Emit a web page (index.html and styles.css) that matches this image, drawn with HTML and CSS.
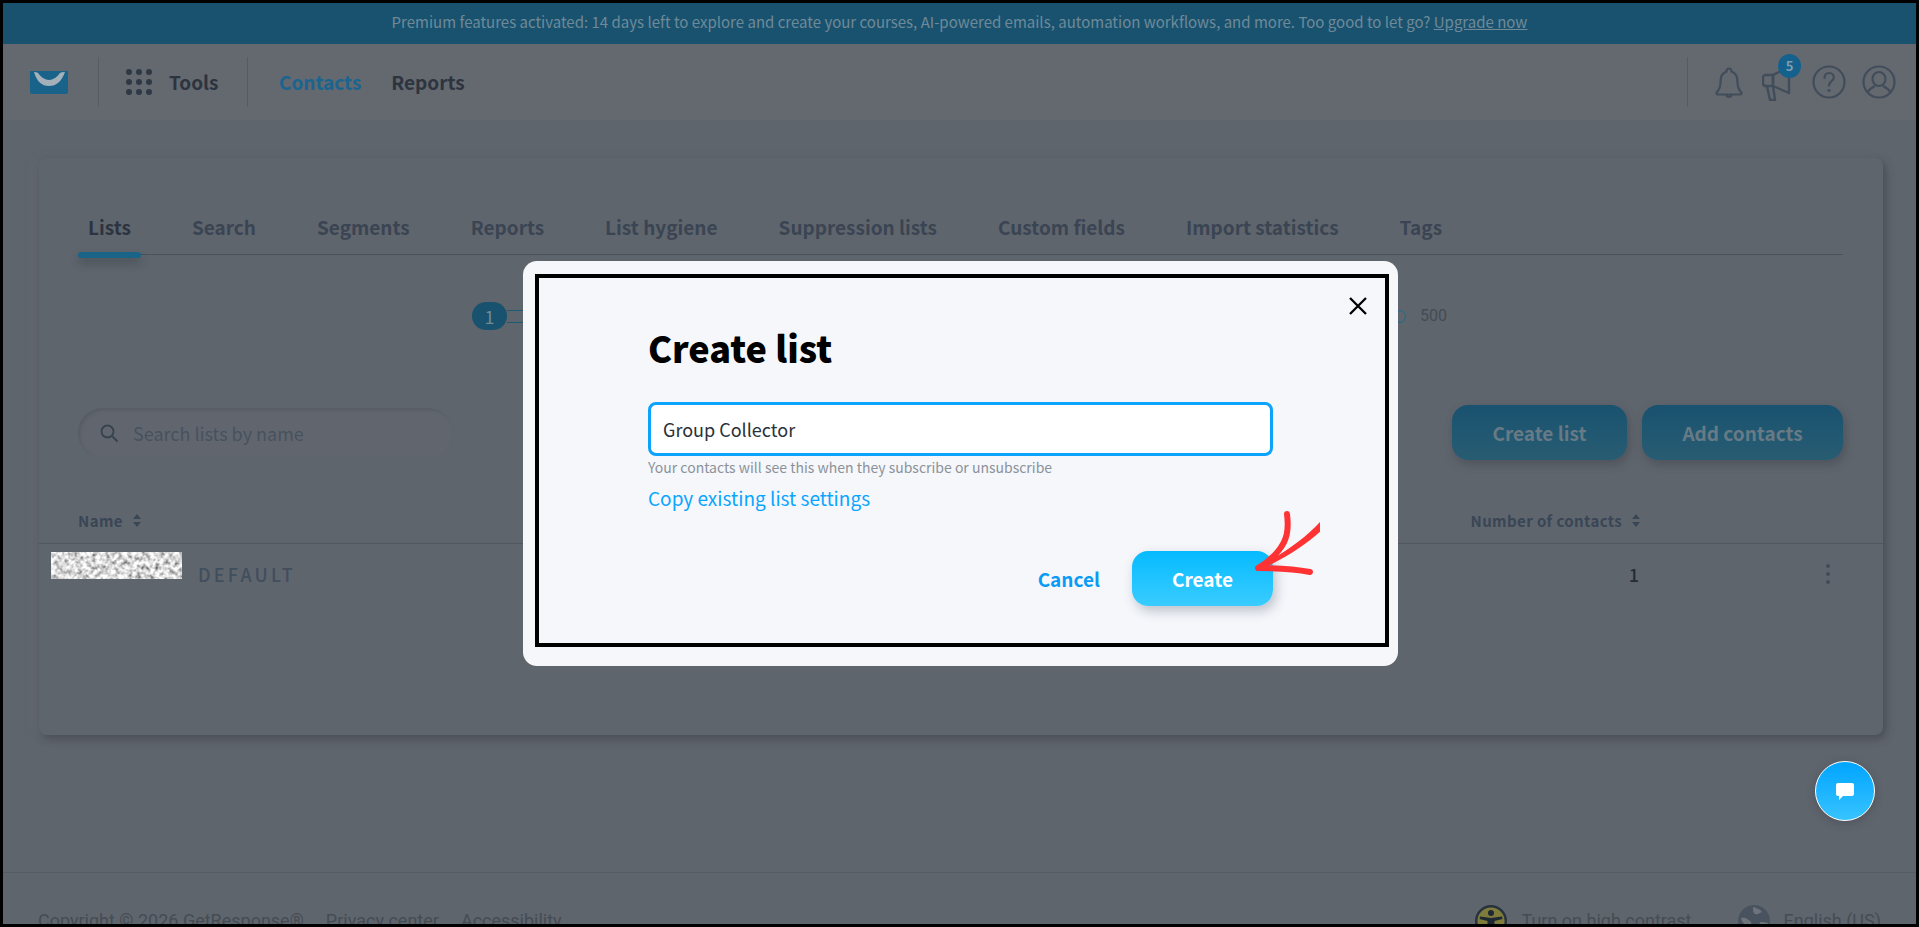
FILE: index.html
```html
<!DOCTYPE html>
<html lang="en">
<head>
<meta charset="utf-8">
<title>Create list</title>
<link rel="stylesheet" href="styles.css">
</head>
<body>
<div class="page">
  <div class="banner">Premium features activated: 14 days left to explore and create your courses, AI-powered emails, automation workflows, and more. Too good to let go? <a class="banner-link">Upgrade now</a></div>

  <header class="topbar">
    <div class="logo-cell">
      <svg class="logo" viewBox="0 0 38 23"><path d="M1 0H37Q38 0 38 1V21Q38 23 36 23H2Q0 23 0 21V1Q0 0 1 0Z" fill="#19638a"/><path d="M4 1Q7 1 8 2Q13 9 19 9Q25 9 30 2Q31 1 35 1Q30 15 19 15Q8 15 4 1Z" fill="#a4b1ba"/></svg>
    </div>
    <div class="tools-cell">
      <svg class="grid-icon" viewBox="0 0 26 26"><g fill="#2f3845"><circle cx="3" cy="3" r="3"/><circle cx="13" cy="3" r="3"/><circle cx="23" cy="3" r="3"/><circle cx="3" cy="13" r="3"/><circle cx="13" cy="13" r="3"/><circle cx="23" cy="13" r="3"/><circle cx="3" cy="23" r="3"/><circle cx="13" cy="23" r="3"/><circle cx="23" cy="23" r="3"/></g></svg>
      <span class="nav-item">Tools</span>
    </div>
    <nav class="main-nav">
      <span class="nav-item nav-active">Contacts</span>
      <span class="nav-item">Reports</span>
    </nav>
    <div class="top-icons">
      <svg class="ico-bell" viewBox="0 0 28 33" fill="none" stroke="#414d5a" stroke-width="2.2"><path d="M14 2.5a2.5 2.5 0 0 1 2.4 3C21 7 22.5 11 22.5 16c0 5 1 7.500 3.500 10 1 1 .5 2.500-1 2.500H3c-1.500 0-2-1.500-1-2.500 2.500-2.500 3.500-5 3.500-10 0-5 1.500-9 6.100-10.500A2.500 2.500 0 0 1 14 2.500Z"/><path d="M11.500 29a2.600 2.600 0 0 0 5 0" stroke-width="2.400"/></svg>
      <div class="mega">
        <svg class="ico-mega" viewBox="0 0 32 35" fill="none" stroke="#414d5a" stroke-width="2.4" stroke-linejoin="round"><path d="M11 9 27 1V27L11 20Z"/><path d="M11 9H4Q1 9 1 12V17Q1 20 4 20H11Z"/><path d="M5 20 8 34H13L11 20"/></svg>
        <span class="badge">5</span>
      </div>
      <svg class="ico-circle" viewBox="0 0 34 34" fill="none" stroke="#414d5a" stroke-width="2.2"><circle cx="17" cy="17" r="15.500"/><path d="M12.500 13c0-3 2-5 4.700-5s4.600 2 4.600 4.500c0 3.500-4.800 3.800-4.800 8" stroke-linecap="round"/><circle cx="17" cy="25.500" r="1.600" fill="#414d5a" stroke="none"/></svg>
      <svg class="ico-circle" viewBox="0 0 34 34" fill="none" stroke="#414d5a" stroke-width="2.2"><circle cx="17" cy="17" r="15.500"/><ellipse cx="17" cy="14" rx="6.500" ry="7"/><path d="M5.500 27.500C7.500 23.500 11 22 13 21M28.500 27.500C26.500 23.500 23 22 21 21"/></svg>
    </div>
  </header>

  <main class="content">
    <section class="card">
      <div class="tabs">
        <span class="tab tab-active">Lists</span>
        <span class="tab">Search</span>
        <span class="tab">Segments</span>
        <span class="tab">Reports</span>
        <span class="tab">List hygiene</span>
        <span class="tab">Suppression lists</span>
        <span class="tab">Custom fields</span>
        <span class="tab">Import statistics</span>
        <span class="tab">Tags</span>
      </div>

      <div class="slider">
        <span class="slider-pill">1</span>
        <span class="slider-track"></span>
        <span class="slider-ring"></span>
        <span class="slider-max">500</span>
      </div>

      <div class="toolbar">
        <div class="search">
          <svg class="search-icon" viewBox="0 0 18 18" fill="none" stroke="#37424f" stroke-width="1.800"><circle cx="7.500" cy="7.500" r="6"/><path d="M12 12l5 5" stroke-linecap="round"/></svg>
          <span class="search-text">Search lists by name</span>
        </div>
        <div class="toolbar-actions">
          <span class="btn-dim btn-create">Create list</span>
          <span class="btn-dim btn-add">Add contacts</span>
        </div>
      </div>

      <div class="table-head">
        <span class="th">Name <svg class="sort" viewBox="0 0 8 13"><path d="M4 0 8 5H0ZM4 13 0 8H8Z"/></svg></span>
        <span class="th th-count">Number of contacts <svg class="sort" viewBox="0 0 8 13"><path d="M4 0 8 5H0ZM4 13 0 8H8Z"/></svg></span>
      </div>
      <div class="table-row">
        <svg class="blurred" viewBox="0 0 131 27" preserveAspectRatio="none">
          <filter id="noise" x="0" y="0" width="100%" height="100%"><feTurbulence type="fractalNoise" baseFrequency="0.22" numOctaves="2" seed="7"/><feColorMatrix values="1.700 0 0 0 -.15 1.700 0 0 0 -.15 1.700 0 0 0 -.15 0 0 0 0 1"/><feGaussianBlur stdDeviation=".6"/></filter>
          <rect width="131" height="27" filter="url(#noise)"/>
        </svg>
        <span class="tag-default">DEFAULT</span>
        <span class="count">1</span>
        <svg class="kebab" viewBox="0 0 4 20"><g fill="#414b58"><circle cx="2" cy="2" r="2"/><circle cx="2" cy="10" r="2"/><circle cx="2" cy="18" r="2"/></g></svg>
      </div>
    </section>
  </main>

  <footer class="footer">
    <span>Copyright © 2026 GetResponse®</span>
    <span>Privacy center</span>
    <span>Accessibility</span>
    <div class="footer-right">
      <span class="footer-opt">
        <svg class="foot-icon" viewBox="0 0 32 32"><circle cx="16" cy="16" r="14.800" fill="#7e7b3b" stroke="#27323f" stroke-width="2.400"/><g fill="#1e2833"><circle cx="16" cy="8" r="3"/><path d="M5 11.500 16 13l11-1.500.5 2.500-8 2V22l3 8h-3L16 23l-3.500 7h-3l3-8v-6l-8-2Z"/></g></svg>
        Turn on high contrast
      </span>
      <span class="footer-opt">
        <svg class="foot-icon" viewBox="0 0 32 32"><circle cx="16" cy="16" r="16" fill="#49535f"/><path d="M15 2c3 1 7 2 9 5-3 1-4 3-7 2-2-1-2-4-2-7ZM3 13c4-1 7 1 10 4 1 3-1 5-3 7-2-3-6-6-7-11ZM22 17c3 0 6 0 8 1-1 5-4 8-7 10-2-4-2-7-1-11Z" fill="#6d747c"/></svg>
        English (US)
      </span>
    </div>
  </footer>

  <button class="chat" type="button" aria-label="Chat">
    <svg class="chat-icon" viewBox="0 0 18 17"><path d="M2 0H16Q18 0 18 2V11Q18 13 16 13H7L3 17V13H2Q0 13 0 11V2Q0 0 2 0Z" fill="#fff"/></svg>
  </button>

  <div class="modal">
    <button class="close" type="button" aria-label="Close">
      <svg viewBox="0 0 18 18" fill="none" stroke="#000" stroke-width="2.300"><path d="M1 1 17 17M17 1 1 17"/></svg>
    </button>
    <h1 class="modal-title">Create list</h1>
    <div class="field">Group Collector</div>
    <p class="hint">Your contacts will see this when they subscribe or unsubscribe</p>
    <a class="copy-link">Copy existing list settings</a>
    <div class="modal-actions">
      <span class="cancel">Cancel</span>
      <span class="btn-create-main">Create</span>
    </div>
    <div class="annot-frame"></div>
    <svg class="arrow" viewBox="1250 405 70 175" fill="none">
      <path d="M1361.500 412C1364 425 1364.500 445 1359 463C1355 478 1349 495 1339 510C1326 530 1300 551 1262 569L1259 566C1293 549 1318 528 1332 507C1343 491 1349 476 1352 462C1357 445 1361 428 1361.500 412Z" fill="#ff3333"/>
      <path d="M1287 514C1289 530 1287 540 1279 550C1273 558 1265 564 1258 568" stroke="#ff3333" stroke-width="6" stroke-linecap="round"/>
      <path d="M1259 568C1275 568 1295 569 1310 572" stroke="#ff3333" stroke-width="6" stroke-linecap="round"/>
    </svg>
  </div>

  <div class="shot-frame"></div>
</div>
</body>
</html>
```

FILE: styles.css
```css
* { box-sizing: border-box; }

html, body {
  margin: 0;
  padding: 0;
  height: 100%;
  overflow: hidden;
}

body {
  font-family: "Noto Sans CJK JP", "Noto Sans", sans-serif;
  color: #2f3845;
  background: #5f656d;
}

.page {
  position: relative;
  width: 1919px;
  height: 927px;
  overflow: hidden;
  background: #5f656d;
}

.shot-frame {
  position: absolute;
  inset: 0;
  border: 3px solid #000;
  pointer-events: none;
}

/* banner */
.banner {
  height: 44px;
  padding-top: 10px;
  background: #19526f;
  color: #6e8a99;
  font-size: 15px;
  line-height: 24px;
  text-align: center;
}

.banner-link { text-decoration: underline; }

/* top bar */
.topbar {
  display: flex;
  align-items: center;
  height: 76px;
  background: #64686f;
}

.logo-cell {
  display: flex;
  align-items: center;
  width: 99px;
  height: 50px;
  padding-left: 30px;
  border-right: 1px solid #575c64;
}

.logo { width: 38px; height: 23px; }

.tools-cell {
  display: flex;
  align-items: center;
  gap: 17px;
  width: 149px;
  height: 50px;
  padding-left: 27px;
  border-right: 1px solid #575c64;
}

.grid-icon { width: 26px; height: 26px; }

.nav-item {
  font-size: 19px;
  line-height: 24px;
  font-weight: 700;
  color: #2c3440;
}

.nav-active { color: #1a6490; }

.main-nav {
  display: flex;
  gap: 30px;
  padding-left: 31px;
}

.top-icons {
  display: flex;
  align-items: center;
  height: 50px;
  margin-left: auto;
  margin-right: 23px;
  padding-left: 27px;
  border-left: 1px solid #575c64;
}

.ico-bell { width: 28px; height: 33px; margin-right: 19px; }

.mega {
  position: relative;
  width: 32px;
  height: 35px;
  margin-right: 18px;
  margin-top: 2px;
}

.ico-mega { width: 32px; height: 35px; display: block; }

.badge {
  position: absolute;
  top: -12px;
  right: -7px;
  width: 23px;
  height: 24px;
  border-radius: 50%;
  background: #15618d;
  color: #7f9cae;
  font-size: 13px;
  font-weight: 700;
  line-height: 24px;
  text-align: center;
}

.ico-circle { width: 34px; height: 34px; }
.ico-circle + .ico-circle { margin-left: 16px; }

/* content */
.content { padding: 38px 36px 0 39px; }

.card {
  height: 577px;
  padding: 57px 40px 0 39px;
  border-radius: 8px;
  background: #5f656d;
  box-shadow: 3px 4px 8px rgba(48, 50, 60, .45), -6px 0 10px rgba(110, 112, 120, .18);
}

.tabs {
  display: flex;
  gap: 41px;
  height: 40px;
  border-bottom: 1px solid #4c515a;
}

.tab {
  position: relative;
  height: 40px;
  padding: 0 10px;
  font-size: 19px;
  line-height: 24px;
  font-weight: 700;
  color: #3a4452;
}

.tab-active { color: #2c3440; }

.tab-active::after {
  content: "";
  position: absolute;
  left: 0;
  right: 0;
  bottom: -3px;
  height: 6px;
  border-radius: 3px;
  background: #1a6488;
  box-shadow: 0 5px 8px rgba(40, 44, 54, .4);
}

.slider {
  display: flex;
  align-items: center;
  width: 975px;
  height: 28px;
  margin: 47px 0 0 394px;
}

.slider-pill {
  width: 35px;
  height: 28px;
  border-radius: 14px;
  background: #19526f;
  color: #74898f;
  font-size: 18px;
  line-height: 28px;
  text-align: center;
}

.slider-track {
  flex: 1;
  height: 13px;
  border-top: 1px solid #1d5a78;
  border-bottom: 1px solid #1d5a78;
}

.slider-ring {
  width: 13px;
  height: 13px;
  border: 1px solid #1d6a8c;
  border-radius: 50%;
}

.slider-max {
  margin-left: 14px;
  font-family: Roboto, sans-serif;
  font-size: 16px;
  line-height: 20px;
  color: #454b53;
}

.toolbar {
  display: flex;
  align-items: center;
  justify-content: space-between;
  height: 55px;
  margin-top: 75px;
}

.search {
  display: flex;
  align-items: center;
  width: 375px;
  height: 50px;
  padding-left: 22px;
  border-radius: 25px;
  background: #61666e;
  box-shadow: inset 2px 2px 3px rgba(70, 74, 84, .35);
}

.search-icon { width: 18px; height: 18px; }

.search-text {
  margin-left: 15px;
  font-size: 18px;
  line-height: 24px;
  color: #47525f;
}

.toolbar-actions { display: flex; gap: 15px; }

.btn-dim {
  height: 55px;
  border-radius: 16px;
  background: linear-gradient(#19526f, #285c72);
  box-shadow: 2px 4px 10px rgba(50, 54, 64, .4);
  color: #677a85;
  font-size: 19px;
  font-weight: 700;
  line-height: 55px;
  text-align: center;
}

.btn-create { width: 175px; }
.btn-add { width: 201px; }

.table-head {
  display: flex;
  justify-content: space-between;
  align-items: center;
  height: 84px;
  margin: 0 -40px 0 -39px;
  padding: 50px 243px 12px 39px;
  border-bottom: 1px solid #51565f;
}

.th {
  display: flex;
  align-items: center;
  gap: 6px;
  font-size: 15px;
  line-height: 22px;
  font-weight: 700;
  letter-spacing: .4px;
  color: #394656;
  white-space: pre;
}

.sort { width: 8px; height: 13px; fill: #394656; }

.table-row {
  display: flex;
  align-items: center;
  height: 60px;
  margin: 0 -40px 0 -39px;
  padding-left: 12px;
}

.blurred {
  width: 131px;
  height: 27px;
  margin-top: -18px;
}

.tag-default {
  margin-left: 16px;
  font-size: 18px;
  line-height: 24px;
  font-weight: 500;
  letter-spacing: 3.200px;
  color: #414e5d;
}

.count {
  margin-left: auto;
  font-size: 18px;
  line-height: 24px;
  font-weight: 500;
  color: #242c38;
}

.kebab {
  width: 4px;
  height: 20px;
  margin: 0 53px 0 187px;
}

/* footer */
.footer {
  display: flex;
  gap: 22px;
  height: 60px;
  margin: 137px 3px 0;
  padding: 36px 35px 0;
  border-top: 1px solid #565c65;
  font-family: Roboto, sans-serif;
  font-size: 18px;
  line-height: 24px;
  color: #464c54;
}

.footer-right {
  display: flex;
  gap: 46px;
  margin-left: auto;
}

.footer-opt {
  display: flex;
  align-items: center;
  gap: 14px;
}

.foot-icon { width: 32px; height: 32px; flex: none; }

/* chat */
.chat {
  position: absolute;
  top: 761px;
  left: 1815px;
  display: flex;
  align-items: center;
  justify-content: center;
  width: 60px;
  height: 60px;
  padding: 0;
  border: 1px solid #fff;
  border-radius: 50%;
  background: linear-gradient(#00a5ff, #38c3ff);
  box-shadow: 0 2px 8px rgba(50, 50, 60, .35);
}

.chat-icon { width: 18px; height: 17px; }

/* modal */
.modal {
  position: absolute;
  top: 261px;
  left: 523px;
  width: 875px;
  height: 405px;
  padding: 64px 125px 0;
  border-radius: 14px;
  background: #f5f7fb;
}

.close {
  position: absolute;
  top: 36px;
  left: 826px;
  width: 18px;
  height: 18px;
  padding: 0;
  border: 0;
  background: none;
}

.close svg { display: block; }

.modal-title {
  margin: 0;
  font-size: 36px;
  line-height: 44px;
  font-weight: 900;
  color: #000;
}

.field {
  height: 54px;
  margin-top: 33px;
  padding-left: 12px;
  border: 3px solid #0ba3fb;
  border-radius: 8px;
  background: #fff;
  color: #2b303a;
  font-size: 18px;
  line-height: 48px;
}

.hint {
  margin: 2px 0 0;
  font-size: 14px;
  line-height: 18px;
  color: #8c929a;
}

.copy-link {
  display: block;
  margin-top: 9px;
  font-size: 19px;
  line-height: 26px;
  color: #0aa5ff;
}

.modal-actions {
  display: flex;
  align-items: center;
  justify-content: flex-end;
  gap: 32px;
  margin-top: 40px;
}

.cancel {
  font-size: 19px;
  font-weight: 700;
  line-height: 24px;
  color: #0a9cf5;
}

.btn-create-main {
  width: 141px;
  height: 55px;
  border-radius: 16px;
  background: linear-gradient(#05bbff, #3accff);
  box-shadow: 3px 5px 12px rgba(60, 70, 90, .3);
  color: #fff;
  font-size: 19px;
  font-weight: 700;
  line-height: 55px;
  text-align: center;
}

/* annotation drawn over the dialog */
.annot-frame {
  position: absolute;
  top: 13px;
  left: 12px;
  width: 854px;
  height: 373px;
  border: 4px solid #000;
  pointer-events: none;
}

.arrow {
  position: absolute;
  top: 144px;
  left: 727px;
  width: 70px;
  height: 175px;
}
```
